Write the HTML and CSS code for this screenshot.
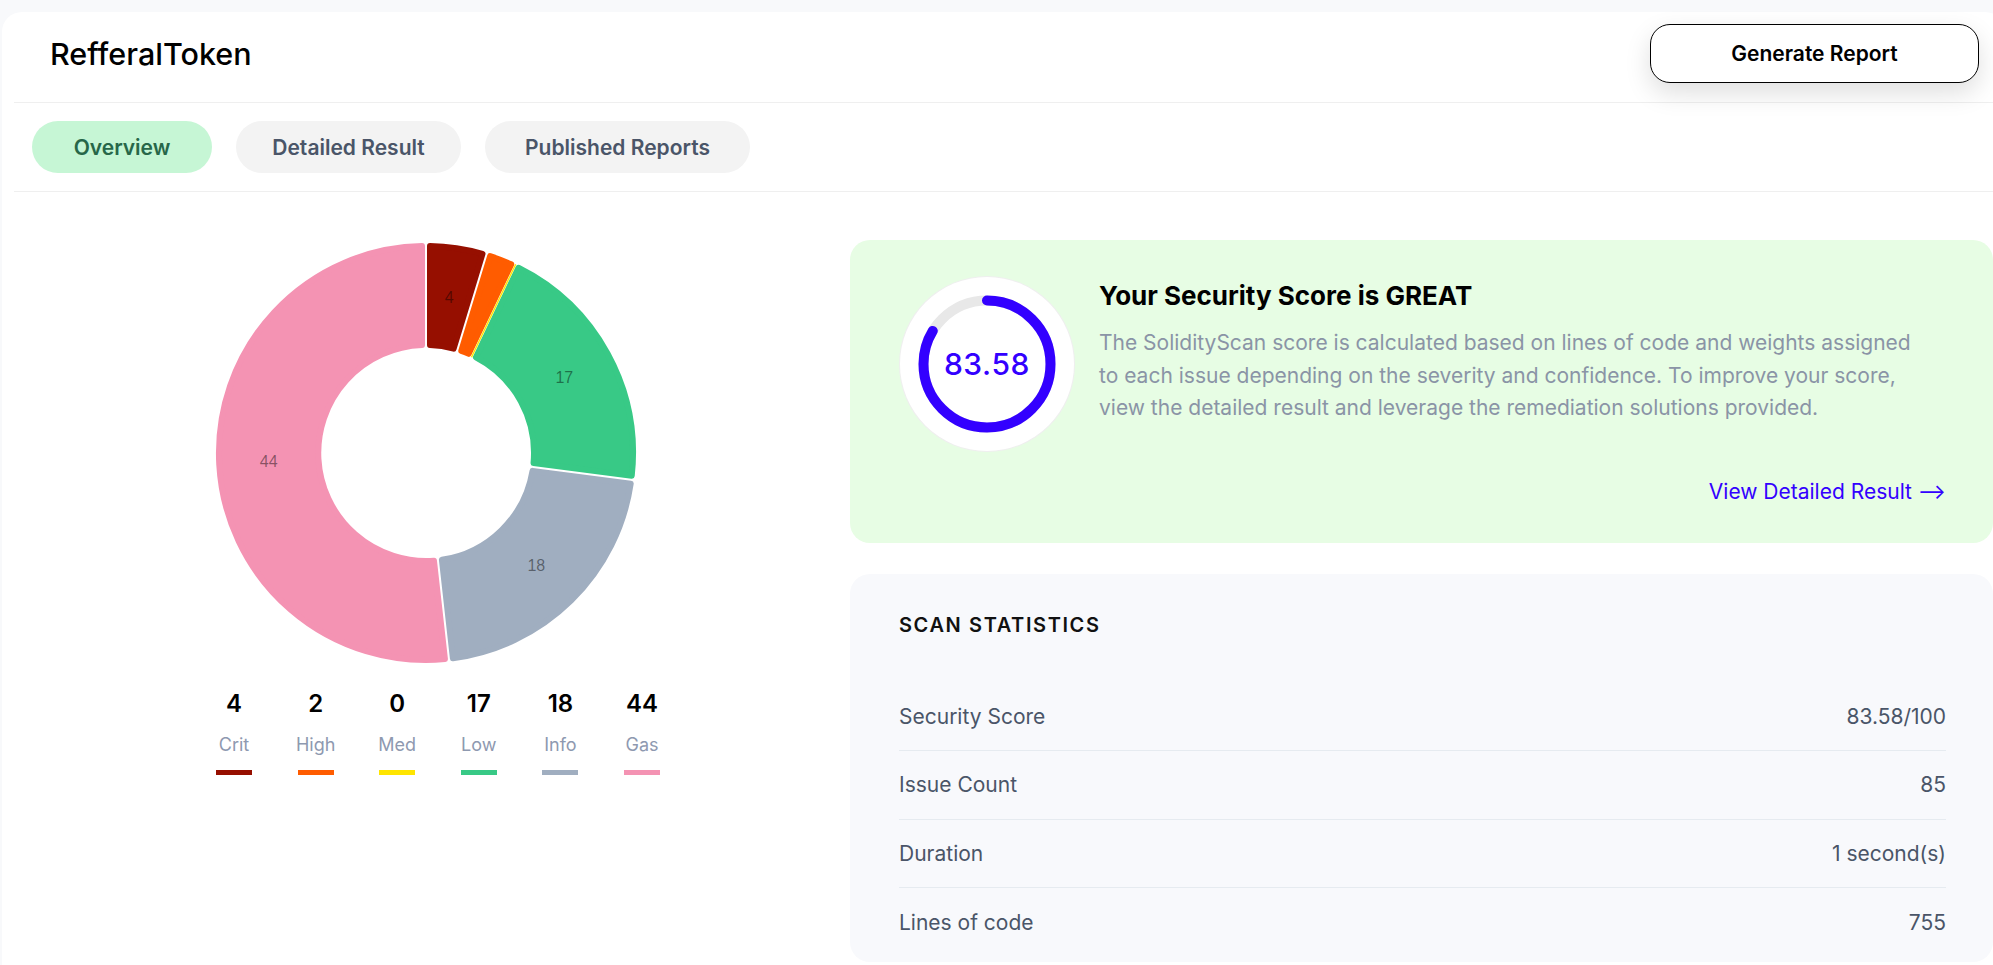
FILE: index.html
```html
<!DOCTYPE html>
<html lang="en">
<head>
<meta charset="utf-8">
<title>RefferalToken – Overview</title>
<link rel="stylesheet" href="styles.css">
</head>
<body>
<main class="card">
  <header class="header">
    <h1 class="title">RefferalToken</h1>
    <button class="btn-generate" type="button">Generate Report</button>
  </header>
  <nav class="tabs">
    <button class="tab tab-active tab-overview" type="button">Overview</button>
    <button class="tab tab-detailed" type="button">Detailed Result</button>
    <button class="tab tab-published" type="button">Published Reports</button>
  </nav>
  <section class="content">
    <div class="chart-col">
      <svg id="donut" class="donut" width="452" height="452" viewBox="0 0 452 452"></svg>
      <ul class="legend">
        <li class="legend-item"><span class="legend-num">4</span><span class="legend-label">Crit</span><span class="legend-bar bar-crit"></span></li>
        <li class="legend-item"><span class="legend-num">2</span><span class="legend-label">High</span><span class="legend-bar bar-high"></span></li>
        <li class="legend-item"><span class="legend-num">0</span><span class="legend-label">Med</span><span class="legend-bar bar-med"></span></li>
        <li class="legend-item"><span class="legend-num">17</span><span class="legend-label">Low</span><span class="legend-bar bar-low"></span></li>
        <li class="legend-item"><span class="legend-num">18</span><span class="legend-label">Info</span><span class="legend-bar bar-info"></span></li>
        <li class="legend-item"><span class="legend-num">44</span><span class="legend-label">Gas</span><span class="legend-bar bar-gas"></span></li>
      </ul>
    </div>
    <div class="side-col">
      <div class="score-card">
        <div class="score-top">
          <div class="score-ring">
            <svg class="ring-svg" width="174" height="174" viewBox="0 0 174 174">
              <circle class="ring-track" cx="87" cy="87" r="63.5"></circle>
              <circle class="ring-progress" cx="87" cy="87" r="63.5" stroke-dasharray="333.47 398.98" transform="rotate(-90 87 87)"></circle>
            </svg>
            <span class="score-value">83.58</span>
          </div>
          <div class="score-text">
            <h2 class="score-title">Your Security Score is GREAT</h2>
            <p class="score-desc">The SolidityScan score is calculated based on lines of code and weights assigned to each issue depending on the severity and confidence. To improve your score, view the detailed result and leverage the remediation solutions provided.</p>
          </div>
        </div>
        <a class="score-link" href="#">View Detailed Result ⟶</a>
      </div>
      <div class="stats-card">
        <h3 class="stats-title">SCAN STATISTICS</h3>
        <dl class="stats-list">
          <div class="stats-row"><dt>Security Score</dt><dd>83.58/100</dd></div>
          <div class="stats-row"><dt>Issue Count</dt><dd>85</dd></div>
          <div class="stats-row"><dt>Duration</dt><dd>1 second(s)</dd></div>
          <div class="stats-row"><dt>Lines of code</dt><dd>755</dd></div>
        </dl>
      </div>
    </div>
  </section>
</main>
<script src="app.js"></script>
</body>
</html>
```

FILE: styles.css
```css
* { box-sizing: border-box; margin: 0; padding: 0; }

html, body { background: #f8f9fb; }

body {
  font-family: Inter, "Noto Sans", "Liberation Sans", sans-serif;
  width: 1993px;
  height: 965px;
  overflow: hidden;
  color: #000;
}

.card {
  background: #fff;
  margin: 12px 0 0 2px;
  width: 2003px;
  min-height: 953px;
  padding: 0 12px;
  border-radius: 20px 20px 0 0;
}

.header {
  display: flex;
  align-items: center;
  justify-content: space-between;
  height: 91px;
  padding: 12px 14px 19px 36px;
  border-bottom: 1px solid #efefef;
}

.title {
  font-size: 30.5px;
  font-weight: 500;
  line-height: 36px;
  color: #000;
}

.btn-generate {
  width: 329px;
  height: 59px;
  border: 1px solid #000;
  border-radius: 20px;
  background: #fff;
  font-family: inherit;
  font-size: 21px;
  font-weight: 600;
  color: #000;
  box-shadow: 0 10px 26px rgba(0, 0, 0, 0.13);
}

.tabs {
  display: flex;
  gap: 24px;
  padding: 18px;
  border-bottom: 1px solid #efefef;
}

.tab {
  height: 52px;
  border: 0;
  border-radius: 26px;
  background: #f3f3f3;
  color: #4a5568;
  font-family: inherit;
  font-size: 21px;
  font-weight: 600;
}

.tab-overview { width: 180px; }
.tab-detailed { width: 225px; }
.tab-published { width: 265px; }

.tab-active {
  background: #c6f6d5;
  color: #276749;
}

.content {
  display: flex;
}

.chart-col {
  width: 836px;
  display: flex;
  flex-direction: column;
  align-items: center;
  padding-top: 35px;
}

.donut {
  display: block;
  margin-right: 12px;
}

.donut-label {
  font-family: "Liberation Sans", Arial, sans-serif;
  font-size: 16px;
  fill: rgba(0, 0, 0, 0.45);
  text-anchor: middle;
  dominant-baseline: central;
}

.legend {
  display: flex;
  list-style: none;
  margin: 10px 0 0 12px;
}

.legend-item {
  width: 81.6px;
  display: flex;
  flex-direction: column;
  align-items: center;
}

.legend-num {
  font-size: 24px;
  font-weight: 600;
  line-height: 30px;
  color: #000;
}

.legend-label {
  font-size: 18px;
  line-height: 24px;
  margin-top: 14px;
  color: #8e99b0;
}

.legend-bar {
  width: 36px;
  height: 5px;
  margin-top: 13px;
}

.bar-crit { background: #960f00; }
.bar-high { background: #ff5c00; }
.bar-med { background: #ffe500; }
.bar-low { background: #38c986; }
.bar-info { background: #a0aec0; }
.bar-gas { background: #f493b3; }

.side-col {
  width: 1143px;
  padding-top: 48px;
}

.score-card {
  background: #e7fde4;
  border-radius: 20px;
  padding: 37px 47px 36px 50px;
}

.score-top {
  display: flex;
  align-items: flex-start;
}

.score-ring {
  position: relative;
  width: 174px;
  height: 174px;
  flex: none;
  border-radius: 50%;
  background: #fff;
  box-shadow: 0 0 0 1px #efefef;
}

.ring-svg { display: block; }

.ring-track {
  fill: none;
  stroke: #e8e8e8;
  stroke-width: 10;
}

.ring-progress {
  fill: none;
  stroke: #3300ff;
  stroke-width: 10;
  stroke-linecap: round;
}

.score-value {
  position: absolute;
  inset: 0;
  display: flex;
  align-items: center;
  justify-content: center;
  font-size: 30px;
  font-weight: 500;
  letter-spacing: 0.6px;
  color: #3300ff;
}

.score-text {
  margin-left: 25px;
}

.score-title {
  margin-top: 4px;
  font-size: 26px;
  font-weight: 700;
  line-height: 30px;
  color: #000;
}

.score-desc {
  margin-top: 16px;
  max-width: 825px;
  font-size: 21px;
  line-height: 32.5px;
  color: #8a94a6;
}

.score-link {
  display: block;
  margin-top: 26px;
  text-align: right;
  font-size: 21px;
  line-height: 30px;
  color: #3300ff;
  text-decoration: none;
}

.stats-card {
  margin-top: 31px;
  background: #f8f9fc;
  border-radius: 20px;
  padding: 36px 47px 5px 49px;
}

.stats-title {
  font-size: 20px;
  font-weight: 600;
  line-height: 30px;
  letter-spacing: 1.6px;
  color: #111;
}

.stats-list {
  margin-top: 42.5px;
}

.stats-row {
  display: flex;
  align-items: center;
  justify-content: space-between;
  height: 68.5px;
  border-bottom: 1px solid #e6ebf0;
  font-size: 21px;
  color: #4a5568;
}

.stats-row:last-child { border-bottom: 0; }

.stats-row dd { text-align: right; }
```

FILE: app.js
```js
(function () {
  var NS = 'http://www.w3.org/2000/svg';
  var svg = document.getElementById('donut');
  if (!svg) { return; }
  var data = [
    { label: 'Crit', value: 4, color: '#960f00' },
    { label: 'High', value: 2, color: '#ff5c00' },
    { label: 'Med', value: 0, color: '#ffe500' },
    { label: 'Low', value: 17, color: '#38c986' },
    { label: 'Info', value: 18, color: '#a0aec0' },
    { label: 'Gas', value: 44, color: '#f493b3' }
  ];
  var cx = 226, cy = 226, R = 210, r = 105, cr = 3, d = 4;
  var total = 0;
  data.forEach(function (s) { total += s.value; });

  function pt(rad, a) { return [cx + rad * Math.sin(a), cy - rad * Math.cos(a)]; }
  function f(p) { return p[0].toFixed(2) + ' ' + p[1].toFixed(2); }

  var acc = 0;
  var lines = [];
  var labels = [];
  data.forEach(function (s) {
    var a0 = acc / total * 2 * Math.PI;
    acc += s.value;
    var a1 = acc / total * 2 * Math.PI;
    if (s.value === 0) {
      lines.push({ a: a0, color: s.color });
      return;
    }
    var Ro = R - cr, Ri = r + cr;
    var ao0 = a0 + Math.asin(d / Ro), ao1 = a1 - Math.asin(d / Ro);
    var ai0 = a0 + Math.asin(d / Ri), ai1 = a1 - Math.asin(d / Ri);
    var lo = (ao1 - ao0) > Math.PI ? 1 : 0;
    var li = (ai1 - ai0) > Math.PI ? 1 : 0;
    var dStr = 'M' + f(pt(Ro, ao0)) +
      ' A' + Ro + ' ' + Ro + ' 0 ' + lo + ' 1 ' + f(pt(Ro, ao1)) +
      ' L' + f(pt(Ri, ai1)) +
      ' A' + Ri + ' ' + Ri + ' 0 ' + li + ' 0 ' + f(pt(Ri, ai0)) + ' Z';
    var path = document.createElementNS(NS, 'path');
    path.setAttribute('d', dStr);
    path.setAttribute('fill', s.color);
    path.setAttribute('stroke', s.color);
    path.setAttribute('stroke-width', String(cr * 2));
    path.setAttribute('stroke-linejoin', 'round');
    svg.appendChild(path);
    if (s.value >= 3) {
      labels.push({ p: pt((R + r) / 2, (a0 + a1) / 2), text: String(s.value) });
    }
  });

  lines.forEach(function (l) {
    var p0 = pt(r + 1, l.a), p1 = pt(R - 1, l.a);
    var line = document.createElementNS(NS, 'line');
    line.setAttribute('x1', p0[0].toFixed(2));
    line.setAttribute('y1', p0[1].toFixed(2));
    line.setAttribute('x2', p1[0].toFixed(2));
    line.setAttribute('y2', p1[1].toFixed(2));
    line.setAttribute('stroke', l.color);
    line.setAttribute('stroke-width', '1.4');
    svg.appendChild(line);
  });

  labels.forEach(function (lb) {
    var t = document.createElementNS(NS, 'text');
    t.setAttribute('x', lb.p[0].toFixed(2));
    t.setAttribute('y', lb.p[1].toFixed(2));
    t.setAttribute('class', 'donut-label');
    t.textContent = lb.text;
    svg.appendChild(t);
  });
})();
```
